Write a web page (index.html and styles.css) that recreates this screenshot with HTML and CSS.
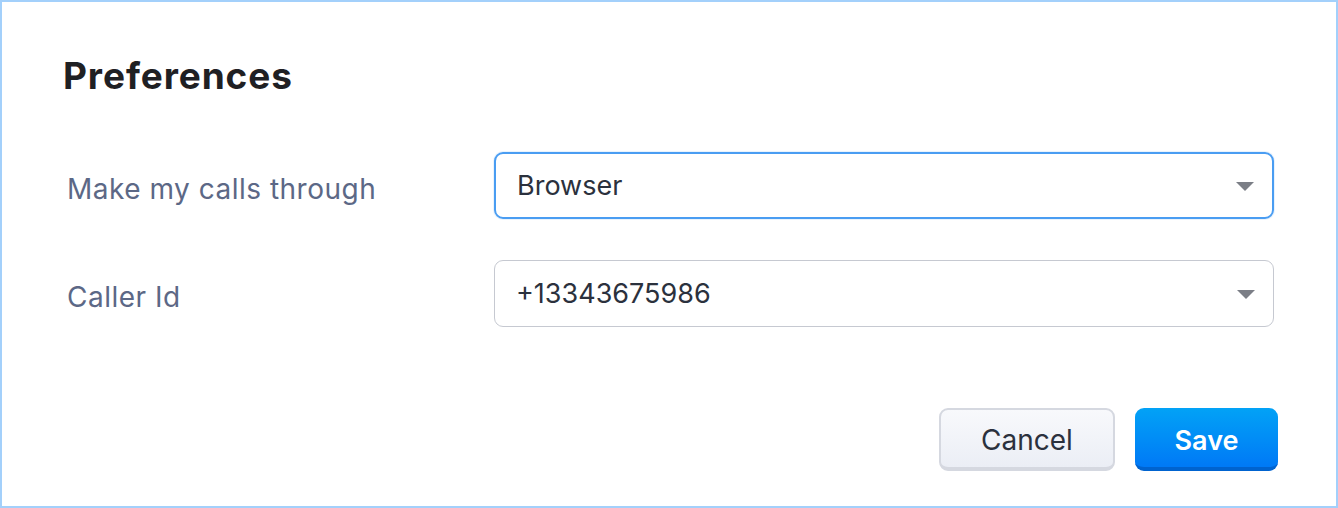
FILE: index.html
```html
<!DOCTYPE html>
<html lang="en">
<head>
<meta charset="utf-8">
<title>Preferences</title>
<link rel="stylesheet" href="styles.css">
</head>
<body>
<div class="dialog">
  <h1 class="title">Preferences</h1>
  <div class="form">
    <div class="row">
      <label class="label">Make my calls through</label>
      <div class="select focused">
        <span class="value">Browser</span>
        <svg class="caret" width="18" height="10" viewBox="0 0 18 10"><path d="M0 0H18L9 9Z" fill="#7b7e86"/></svg>
      </div>
    </div>
    <div class="row">
      <label class="label">Caller Id</label>
      <div class="select">
        <span class="value">+13343675986</span>
        <svg class="caret" width="18" height="10" viewBox="0 0 18 10"><path d="M0 0H18L9 9Z" fill="#7b7e86"/></svg>
      </div>
    </div>
  </div>
  <div class="actions">
    <button class="btn cancel">Cancel</button>
    <button class="btn save">Save</button>
  </div>
</div>
</body>
</html>
```

FILE: styles.css
```css
* { box-sizing: border-box; }
html, body { margin: 0; padding: 0; background: #fff; }
body { font-family: Inter, "Noto Sans", sans-serif; }
.dialog {
  width: 1338px;
  height: 508px;
  border: 2px solid #a3d0fb;
  padding: 50px 58px 0 61px;
}
.title {
  margin: 0;
  font-size: 37px;
  font-weight: 700;
  color: #1f2023;
  line-height: 48px;
  letter-spacing: 0.9px;
}
.form { margin-top: 52px; display: flex; flex-direction: column; gap: 41px; }
.row { display: flex; align-items: center; }
.label {
  width: 431px;
  padding-left: 4px;
  padding-top: 6px;
  font-size: 28px;
  letter-spacing: 0.5px;
  color: #5c6886;
}
.select {
  width: 780px;
  height: 67px;
  border: 1.5px solid #c6c9d1;
  border-radius: 9px;
  display: flex;
  align-items: center;
  justify-content: space-between;
  padding: 0 18px 0 21px;
}
.select.focused {
  border: 2px solid #4a9df2;
  box-shadow: 0 0 0 1px rgba(74, 157, 242, 0.12);
}
.value { font-size: 27px; color: #2b313d; }
.caret { margin-top: 3px; }
.actions {
  margin-top: 81px;
  display: flex;
  justify-content: flex-end;
  gap: 20px;
}
.btn {
  height: 63px;
  border-radius: 9px;
  font-family: inherit;
  cursor: pointer;
  padding: 3px 0 0;
}
.cancel {
  width: 176px;
  background: linear-gradient(#f8f9fc, #ebeef5);
  border: 2px solid #d5d8e0;
  border-bottom-width: 4px;
  color: #2b313d;
  font-size: 28px;
}
.save {
  width: 143px;
  background: linear-gradient(#02a2f6, #0079f6);
  border: none;
  border-bottom: 4px solid #0063cf;
  color: #fff;
  font-size: 27px;
  font-weight: 600;
  padding-top: 5px;
}
```
